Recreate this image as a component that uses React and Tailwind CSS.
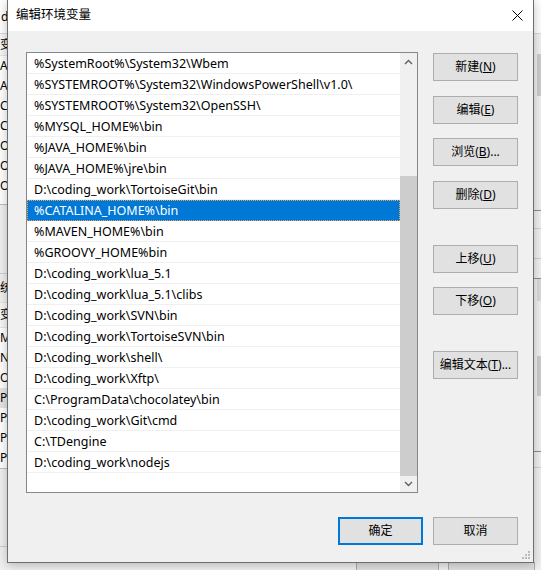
import React from "react";

// Path entries in the list box
const paths = [
  "%SystemRoot%\\System32\\Wbem",
  "%SYSTEMROOT%\\System32\\WindowsPowerShell\\v1.0\\",
  "%SYSTEMROOT%\\System32\\OpenSSH\\",
  "%MYSQL_HOME%\\bin",
  "%JAVA_HOME%\\bin",
  "%JAVA_HOME%\\jre\\bin",
  "D:\\coding_work\\TortoiseGit\\bin",
  "%CATALINA_HOME%\\bin",
  "%MAVEN_HOME%\\bin",
  "%GROOVY_HOME%bin",
  "D:\\coding_work\\lua_5.1",
  "D:\\coding_work\\lua_5.1\\clibs",
  "D:\\coding_work\\SVN\\bin",
  "D:\\coding_work\\TortoiseSVN\\bin",
  "D:\\coding_work\\shell\\",
  "D:\\coding_work\\Xftp\\",
  "C:\\ProgramData\\chocolatey\\bin",
  "D:\\coding_work\\Git\\cmd",
  "C:\\TDengine",
  "D:\\coding_work\\nodejs",
];

const SELECTED = 7;

const userVars = ["AP", "AP", "CK", "CL", "OA", "OA", "OE"];
const sysVars = ["M", "NU", "OS", "Pa", "PA", "PR", "PR"];

function Btn({ label, hot, tail = "", className = "" }) {
  return (
    <button
      className={`w-[85px] h-[28px] bg-[#e1e1e1] border border-[#adadad] text-[12px] text-black flex items-center justify-center ${className}`}
    >
      {label}
      {hot && (
        <>
          (<u>{hot}</u>)
        </>
      )}
      {tail}
    </button>
  );
}

function Chevron({ down }) {
  return (
    <svg width="9" height="6" viewBox="0 0 9 6">
      <path
        d={down ? "M1 1 L4.5 4.5 L8 1" : "M1 5 L4.5 1.5 L8 5"}
        fill="none"
        stroke="#606060"
        strokeWidth="1.4"
      />
    </svg>
  );
}

// Environment variables window that sits behind the dialog
function BackWindow() {
  return (
    <div className="absolute inset-0 bg-[#f0f0f0] flex flex-col text-[12px] text-black">
      <div className="h-[34px] bg-white border-b border-[#d9d9d9] flex items-center shrink-0">
        <div className="w-[7px] overflow-hidden pl-[1px]">d</div>
      </div>
      <div className="flex justify-between flex-1">
        <div className="flex flex-col w-[7px] overflow-hidden">
          <div className="h-[22px] flex items-center bg-[#f7f7f7] border-b border-[#e5e5e5]">变</div>
          {userVars.map((v, i) => (
            <div key={i} className="h-[20px] flex items-center bg-white">
              {v}
            </div>
          ))}
          <div className="h-[8px] bg-white" />
          <div className="h-[69px] border-t border-[#bcbcbc]" />
          <div className="h-[29px] flex items-center border-t border-[#cfcfcf]">统</div>
          <div className="h-[26px] flex items-center bg-[#f7f7f7] border-y border-[#e5e5e5]">变</div>
          {sysVars.map((v, i) => (
            <div
              key={i}
              className={`h-[20px] flex items-center ${i === 3 ? "bg-[#e5e5e5]" : "bg-white"}`}
            >
              {v}
            </div>
          ))}
          <div className="h-[78px] border-t border-[#bcbcbc]" />
          <div className="border-t border-[#cfcfcf]" />
        </div>
        <div className="w-[7px] flex flex-col">
          <div className="h-[20px]" />
          <div className="h-[42px] ml-[3px] bg-[#cdcdcd]" />
          <div className="h-[115px] border-b border-[#8e8e8e]" />
          <div className="h-[18px] border-b border-[#cfcfcf]" />
          <div className="h-[30px] border-b border-[#cfcfcf]" />
          <div className="h-[20px] border-b border-[#8e8e8e]" />
          <div className="h-[22px] ml-[3px] bg-[#dadada]" />
          <div className="h-[55px]" />
          <div className="h-[40px] ml-[3px] bg-[#cdcdcd]" />
          <div className="h-[56px] border-b border-[#8e8e8e]" />
          <div className="h-[16px] border-b border-[#cfcfcf]" />
        </div>
      </div>
      <div className="h-[8px] flex shrink-0">
        <div className="ml-[356px] w-[83px] h-[10px] border border-[#adadad] bg-[#e1e1e1]" />
        <div className="ml-[9px] w-[87px] h-[10px] border border-[#adadad] bg-[#e1e1e1]" />
      </div>
    </div>
  );
}

export default function App() {
  return (
    <div className="relative w-[541px] h-[570px] overflow-hidden font-['Noto_Sans','Noto_Sans_CJK_SC',sans-serif]">
      <BackWindow />

      {/* Edit environment variable dialog */}
      <div className="absolute left-[7px] top-0 w-[527px] h-[563px] bg-[#f0f0f0] border-x border-b border-[#6e6e6e] shadow-[0_2px_10px_rgba(0,0,0,0.25)] flex flex-col">
        <div className="h-[31px] bg-white flex items-center justify-between pl-[8px] pr-[10px] shrink-0">
          <span className="text-[12.5px] text-black">编辑环境变量</span>
          <svg width="11" height="11" viewBox="0 0 11 11">
            <path d="M0.5 0.5 L10.5 10.5 M10.5 0.5 L0.5 10.5" stroke="#000" strokeWidth="1" />
          </svg>
        </div>

        <div className="flex flex-col pl-[18px] pr-[15px] pt-[21px] relative flex-1">
          <div className="flex">
            {/* list box */}
            <div className="w-[392px] h-[441px] border border-[#828790] bg-white flex">
              <div className="flex-1 flex flex-col">
                {paths.map((p, i) => (
                  <div
                    key={i}
                    className={`h-[21px] shrink-0 flex items-center pl-[7px] pt-[1px] text-[12.5px] leading-[19px] whitespace-nowrap border-b ${
                      i === SELECTED
                        ? "bg-[#0078d7] text-white border-[#0078d7] outline-1 outline-dotted outline-[#f3a847] -outline-offset-1"
                        : "text-black border-[#f0f0f0]"
                    }`}
                  >
                    {p}
                  </div>
                ))}
              </div>
              {/* scrollbar */}
              <div className="w-[17px] bg-[#f0f0f0] flex flex-col">
                <div className="h-[17px] flex items-center justify-center">
                  <Chevron />
                </div>
                <div className="h-[106px]" />
                <div className="h-[300px] bg-[#cdcdcd]" />
                <div className="h-[16px] flex items-center justify-center">
                  <Chevron down />
                </div>
              </div>
            </div>

            {/* side buttons */}
            <div className="ml-[15px] mt-[1px] flex flex-col">
              <Btn label="新建" hot="N" />
              <Btn label="编辑" hot="E" className="mt-[15px]" />
              <Btn label="浏览" hot="B" tail="..." className="mt-[14px]" />
              <Btn label="删除" hot="D" className="mt-[15px]" />
              <Btn label="上移" hot="U" className="mt-[36px]" />
              <Btn label="下移" hot="O" className="mt-[14px]" />
              <Btn label="编辑文本" hot="T" tail="..." className="mt-[36px]" />
            </div>
          </div>

          <div className="flex justify-end gap-[10px] mt-[24px]">
            <button className="w-[85px] h-[28px] bg-[#e1e1e1] border-2 border-[#0078d7] text-[12px] text-black flex items-center justify-center">
              确定
            </button>
            <Btn label="取消" />
          </div>

          {/* resize grip */}
          <svg className="absolute right-[2px] bottom-[2px]" width="9" height="9" viewBox="0 0 9 9">
            <rect x="6" y="0" width="2" height="2" fill="#bcbcbc" />
            <rect x="3" y="3" width="2" height="2" fill="#bcbcbc" />
            <rect x="6" y="3" width="2" height="2" fill="#bcbcbc" />
            <rect x="0" y="6" width="2" height="2" fill="#bcbcbc" />
            <rect x="3" y="6" width="2" height="2" fill="#bcbcbc" />
            <rect x="6" y="6" width="2" height="2" fill="#bcbcbc" />
          </svg>
        </div>
      </div>
    </div>
  );
}
